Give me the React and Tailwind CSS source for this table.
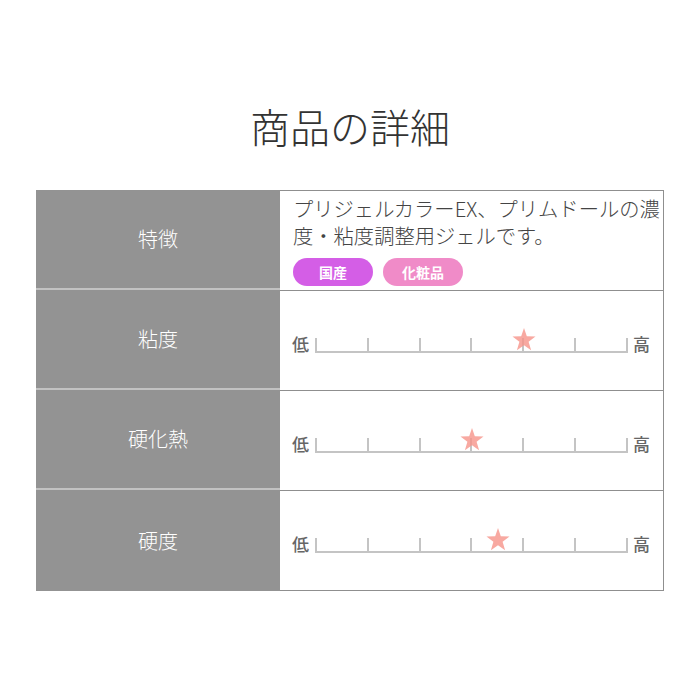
const font = { fontFamily: '"Noto Sans CJK JP", "Noto Sans", sans-serif' };
const light = {
  fontFamily: '"Noto Sans CJK JP Light", "Noto Sans CJK JP DemiLight", "Noto Sans CJK JP", sans-serif',
};
const medium = {
  fontFamily: '"Noto Sans CJK JP Medium", "Noto Sans CJK JP", sans-serif',
};

function Star() {
  return (
    <svg width="24" height="23" viewBox="0 0 24 23" className="opacity-80">
      <polygon
        points="12,0 14.8,8.2 23.5,8.4 16.6,13.7 19.1,22.2 12,17.2 4.9,22.2 7.4,13.7 0.5,8.4 9.2,8.2"
        fill="#f7948a"
      />
    </svg>
  );
}

function Scale({ pos }) {
  // pos: 0..6 along the ticks
  return (
    <div className="flex items-end gap-[6px] pl-[12px] pt-[6px]">
      <span className="text-[17px] font-medium leading-none text-[#666] pb-[1px]" style={medium}>
        低
      </span>
      <div className="relative w-[313px]">
        <div className="flex h-[15px] border-b-2 border-[#c4c4c4]">
          {[0, 1, 2, 3, 4, 5].map((i) => (
            <div
              key={i}
              className={
                'flex-1 border-l-2 border-[#c4c4c4]' + (i === 5 ? ' border-r-2' : '')
              }
            />
          ))}
        </div>
        <div
          className="absolute top-[-10px] -translate-x-1/2"
          style={{ left: `${(pos / 6) * 100}%` }}
        >
          <Star />
        </div>
      </div>
      <span
        className="text-[17px] font-medium leading-none text-[#666] pb-[1px] -ml-[1px]"
        style={medium}
      >
        高
      </span>
    </div>
  );
}

function Row({ label, children, last }) {
  return (
    <div className="grid grid-cols-[244px_1fr]">
      <div
        className={
          'flex items-center justify-center bg-[#939393] text-[20px] font-light text-white ' +
          (last ? 'h-[101px]' : 'h-[100px] border-b-2 border-[#c2c2c2]')
        }
        style={light}
      >
        {label}
      </div>
      <div
        className={
          'border-t border-r border-[#8f8f8f] ' + (last ? 'border-b h-[101px]' : 'h-[100px]')
        }
      >
        {children}
      </div>
    </div>
  );
}

export default function App() {
  return (
    <div className="w-[700px] h-[700px] bg-white" style={font}>
      <h1
        className="pt-[96px] text-center text-[40px] font-extralight leading-[60px] text-[#333]"
        style={light}
      >
        商品の詳細
      </h1>
      <div className="mx-[36px] mt-[34px] flex flex-col">
        <Row label="特徴">
          <div className="pl-[13px] pt-[4px]">
            <p
              className="text-[20.3px] font-light leading-[27px] text-[#444] whitespace-nowrap"
              style={light}
            >
              プリジェルカラーEX、プリムドールの濃
              <br />
              度・粘度調整用ジェルです。
            </p>
            <div className="mt-[9px] flex gap-[10px]">
              <span className="flex h-[28px] w-[80px] items-center justify-center rounded-full bg-[#d45ee6] text-[14px] font-bold text-white">
                国産
              </span>
              <span className="flex h-[28px] w-[80px] items-center justify-center rounded-full bg-[#f08bc8] text-[14px] font-bold text-white">
                化粧品
              </span>
            </div>
          </div>
        </Row>
        <Row label="粘度">
          <div className="flex h-full items-center">
            <Scale pos={4} />
          </div>
        </Row>
        <Row label="硬化熱">
          <div className="flex h-full items-center">
            <Scale pos={3} />
          </div>
        </Row>
        <Row label="硬度" last>
          <div className="flex h-full items-center">
            <Scale pos={3.5} />
          </div>
        </Row>
      </div>
    </div>
  );
}
